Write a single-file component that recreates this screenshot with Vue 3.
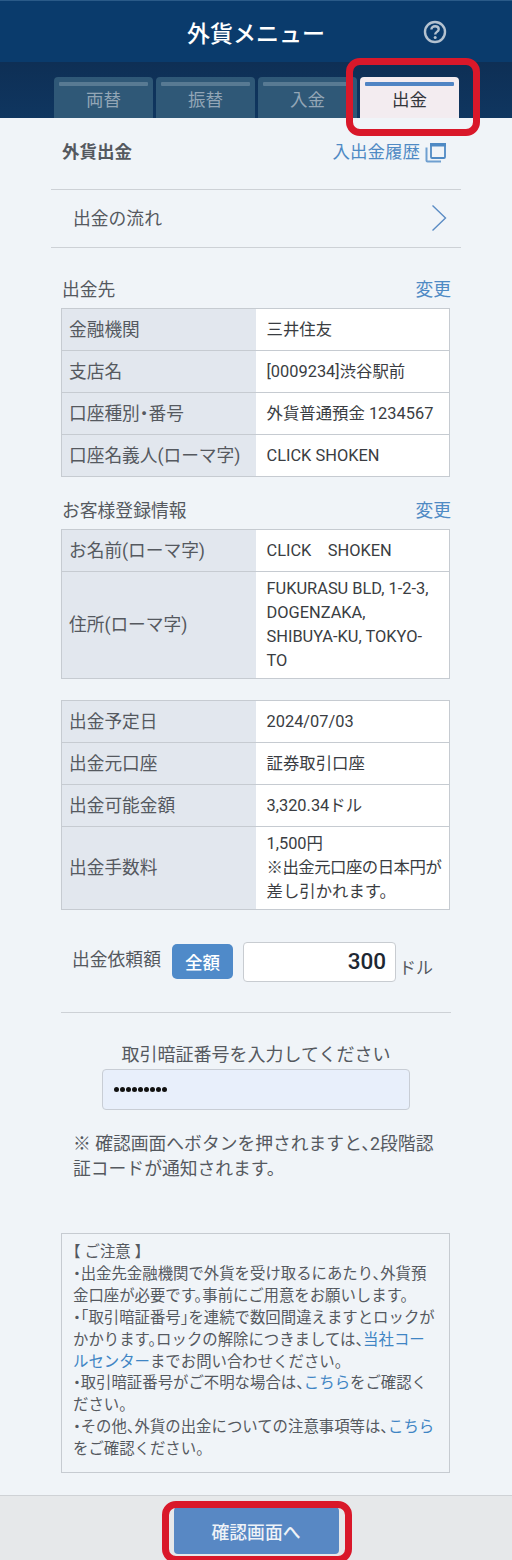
<template>
  <div class="page">
    <header class="head">
      <h1>外貨メニュー</h1>
      <svg class="help" width="24" height="24" viewBox="0 0 24 24">
        <circle cx="12" cy="12" r="10" fill="none" stroke="#b4c2d0" stroke-width="2.4" />
        <path d="M8.4 9.6c0-2.2 1.600-3.400 3.700-3.400s3.600 1.200 3.600 3c0 2.700-3.500 2.600-3.500 5.200" fill="none" stroke="#b4c2d0" stroke-width="2.400" />
        <circle cx="12.200" cy="17.600" r="1.500" fill="#b4c2d0" />
      </svg>
    </header>

    <nav class="tabs">
      <div v-for="t in tabs" :key="t" class="tab" :class="{ active: t === '出金' }">{{ t }}</div>
      <span class="mark mark-tab"></span>
    </nav>

    <main class="body">
      <div class="title-row">
        <h2>外貨出金</h2>
        <a class="history">
          入出金履歴
          <svg width="21" height="21" viewBox="0 0 21 21">
            <rect x="6" y="2" width="14" height="14" fill="none" stroke="#4f8ac4" stroke-width="1.800" rx="1" />
            <rect x="5" y="1" width="16" height="3.500" fill="#4f8ac4" />
            <path d="M1.500 5.500v13a1 1 0 0 0 1 1H16" fill="none" stroke="#6f9fd0" stroke-width="2" />
          </svg>
        </a>
      </div>

      <div class="flow-row">
        <span class="flow-text">出金の流れ</span>
        <svg width="16" height="28" viewBox="0 0 16 28">
          <path d="M1.500 1.500L14.500 14L1.500 26.500" fill="none" stroke="#5b8cc4" stroke-width="1.400" />
        </svg>
      </div>

      <section class="block first">
        <div class="block-head"><span>出金先</span><a>変更</a></div>
        <table class="info">
          <tr v-for="r in bank" :key="r[0]"><th>{{ r[0] }}</th><td>{{ r[1] }}</td></tr>
        </table>
      </section>

      <section class="block second">
        <div class="block-head"><span>お客様登録情報</span><a>変更</a></div>
        <table class="info">
          <tr><th>お名前(ローマ字)</th><td>CLICK　SHOKEN</td></tr>
          <tr class="tall"><th>住所(ローマ字)</th><td>FUKURASU BLD, 1-2-3,<br>DOGENZAKA,<br>SHIBUYA-KU, TOKYO-<br>TO</td></tr>
        </table>
      </section>

      <section class="block third">
        <table class="info">
          <tr v-for="r in detail" :key="r[0]"><th>{{ r[0] }}</th><td>{{ r[1] }}</td></tr>
          <tr class="fee"><th>出金手数料</th><td>1,500円<br><span class="tight">※出金元口座の日本円が</span><br>差し引かれます。</td></tr>
        </table>
      </section>

      <div class="amount">
        <span class="amount-label">出金依頼額</span>
        <button class="all">全額</button>
        <div class="amount-input">300</div>
        <span class="unit">ドル</span>
      </div>

      <div class="pin">
        <p class="pin-label">取引暗証番号を入力してください</p>
        <div class="pin-input">
          <i v-for="n in 9" :key="n"></i>
        </div>
      </div>

      <p class="warn">※ 確認画面へボタンを押されますと、2段階認証コードが通知されます。</p>

      <div class="notice">
        【 ご注意 】<br>
        ・出金先金融機関で外貨を受け取るにあたり、外貨預金口座が必要です。事前にご用意をお願いします。<br>
        ・「取引暗証番号」を連続で数回間違えますとロックがかかります。ロックの解除につきましては、<a>当社コールセンター</a>までお問い合わせください。<br>
        ・取引暗証番号がご不明な場合は、<a>こちら</a>をご確認ください。<br>
        ・その他、外貨の出金についての注意事項等は、<a>こちら</a>をご確認ください。
      </div>
    </main>

    <footer class="foot">
      <button class="confirm">確認画面へ</button>
      <span class="mark mark-btn"></span>
    </footer>
  </div>
</template>

<script setup>
const tabs = ["両替", "振替", "入金", "出金"]

const bank = [
  ["金融機関", "三井住友"],
  ["支店名", "[0009234]渋谷駅前"],
  ["口座種別・番号", "外貨普通預金 1234567"],
  ["口座名義人(ローマ字)", "CLICK SHOKEN"]
]

const detail = [
  ["出金予定日", "2024/07/03"],
  ["出金元口座", "証券取引口座"],
  ["出金可能金額", "3,320.34ドル"]
]
</script>

<style>
html,
body {
  margin: 0;
  background: #f0f4f8;
}
</style>

<style scoped>
.page {
  position: relative;
  width: 512px;
  height: 1560px;
  overflow: hidden;
  background: #f0f4f8;
  color: #55595f;
  font-family: Roboto, "Noto Sans CJK JP", sans-serif;
  font-feature-settings: "halt";
}

.head {
  position: relative;
  height: 62px;
  box-sizing: border-box;
  background: #0a3b6c;
  border-top: 1px solid #2a5a88;
  display: flex;
  align-items: center;
  justify-content: center;
}

.head h1 {
  margin: 0;
  color: #fff;
  font-size: 23px;
  font-weight: 500;
}

.help {
  position: absolute;
  left: 423px;
  top: 19px;
}

.tabs {
  position: relative;
  height: 56px;
  box-sizing: border-box;
  padding: 15px 0 0 54px;
  display: flex;
  gap: 3px;
  background: linear-gradient(#0e2f55, #0f3660);
}

.tab {
  position: relative;
  width: 99px;
  height: 41px;
  box-sizing: border-box;
  padding-top: 11px;
  border-radius: 4px 4px 0 0;
  background: #2f5877;
  color: #93a6b6;
  font-size: 17.500px;
  line-height: 24px;
  text-align: center;
}

.tab::before {
  content: "";
  position: absolute;
  left: 5px;
  right: 5px;
  top: 5px;
  height: 4px;
  background: #587a93;
  border-radius: 1px;
}

.tab.active {
  background: #f3ecf0;
  color: #33363b;
}

.tab.active::before {
  background: #4f84c4;
}

.mark {
  position: absolute;
  box-sizing: border-box;
  border: 7px solid #d9182a;
  border-radius: 14px;
}

.mark-tab {
  left: 346px;
  top: -4px;
  width: 134px;
  height: 78px;
}

.body {
  height: 1377px;
  box-sizing: border-box;
  padding: 0 51px;
}

.title-row {
  height: 72px;
  box-sizing: border-box;
  padding: 21px 15px 0 11px;
  display: flex;
  justify-content: space-between;
  align-items: flex-start;
  border-bottom: 1px solid #cdd1d6;
}

.title-row h2 {
  margin: 0;
  font-size: 17.500px;
  line-height: 26px;
  font-weight: 700;
}

.history {
  display: flex;
  align-items: center;
  gap: 5px;
  color: #4f8ac4;
  font-size: 17.500px;
  line-height: 26px;
}

.flow-row {
  height: 58px;
  box-sizing: border-box;
  padding: 0 14px 0 22px;
  display: flex;
  align-items: center;
  justify-content: space-between;
  border-bottom: 1px solid #cdd1d6;
  font-size: 17.800px;
}

.flow-text {
  margin-bottom: 3px;
}

.flow-row svg {
  margin-bottom: 1px;
}

.block {
  margin: 0 10px;
}

.first {
  padding-top: 23px;
}

.second {
  padding-top: 15px;
}

.third {
  padding-top: 21px;
}

.block-head {
  height: 37px;
  box-sizing: border-box;
  padding: 0 0 4px 1px;
  display: flex;
  justify-content: space-between;
  align-items: center;
  font-size: 17.800px;
}

.block-head a {
  color: #4f8ac4;
}

.info {
  width: 389px;
  box-sizing: border-box;
  border-collapse: collapse;
  table-layout: fixed;
}

.info th,
.info td {
  border: 1px solid #c6cbd1;
  height: 42px;
  padding: 0 0 0 11px;
  box-sizing: border-box;
  text-align: left;
  font-weight: 400;
}

.info th {
  width: 194px;
  padding-left: 7px;
  font-size: 17.700px;
  line-height: 24px;
  background: #e2e7ee;
  border-right: 0;
}

.info td {
  background: #fff;
  color: #3a3d42;
  font-size: 16.400px;
  line-height: 23.800px;
  border-left: 0;
}

.tight {
  letter-spacing: -0.500px;
}

.tall td {
  height: 107px;
}

.fee td {
  height: 83px;
}

.amount {
  height: 103px;
  margin: 0 10px;
  box-sizing: border-box;
  padding: 32px 0 0 11px;
  display: flex;
  align-items: flex-start;
  border-bottom: 1px solid #cdd1d6;
}

.amount-label {
  width: 100px;
  margin-top: 3px;
  font-size: 17.800px;
  line-height: 30px;
}

.all {
  width: 61px;
  height: 35px;
  margin-top: 2px;
  padding: 0;
  border: 0;
  border-radius: 5px;
  background: #4f8ac9;
  color: #fff;
  font: inherit;
  font-size: 17.500px;
  font-weight: 500;
}

.amount-input {
  width: 153px;
  height: 40px;
  margin-left: 10px;
  box-sizing: border-box;
  padding-right: 9px;
  border: 1px solid #c8ccd1;
  border-radius: 4px;
  background: #fff;
  color: #1e2833;
  text-align: right;
  font-size: 22.500px;
  font-weight: 500;
  line-height: 37px;
}

.unit {
  margin: 14px 0 0 3px;
  font-size: 17px;
  line-height: 24px;
}

.pin {
  display: flex;
  flex-direction: column;
  align-items: center;
}

.pin-label {
  margin: 27px 0 0;
  font-size: 18px;
  line-height: 29px;
}

.pin-input {
  width: 308px;
  height: 41px;
  box-sizing: border-box;
  padding-left: 11px;
  display: flex;
  align-items: center;
  gap: 1px;
  border: 1px solid #c8cdd5;
  border-radius: 4px;
  background: #e8effb;
}

.pin-input i {
  width: 5px;
  height: 5px;
  border-radius: 50%;
  background: #111;
}

.warn {
  margin: 21px 20px 0 22px;
  font-size: 17.800px;
  line-height: 25px;
}

.notice {
  margin: 52px 10px 0;
  width: 389px;
  height: 240px;
  box-sizing: border-box;
  padding: 8px 12px 0 11px;
  border: 1px solid #c6cbd1;
  font-size: 15.400px;
  line-height: 21.900px;
}

.notice a {
  color: #3f85c4;
}

.foot {
  position: relative;
  height: 65px;
  box-sizing: border-box;
  display: flex;
  justify-content: center;
  padding-top: 11px;
  background: #e6e8ea;
  border-top: 1px solid #cfd2d6;
}

.confirm {
  width: 165px;
  height: 47px;
  padding: 0;
  border: 0;
  border-radius: 4px;
  background: #5888c4;
  color: #eef2f7;
  font: inherit;
  font-size: 17.800px;
  font-weight: 500;
}

.mark-btn {
  left: 162px;
  top: 5px;
  width: 190px;
  height: 62px;
}
</style>
